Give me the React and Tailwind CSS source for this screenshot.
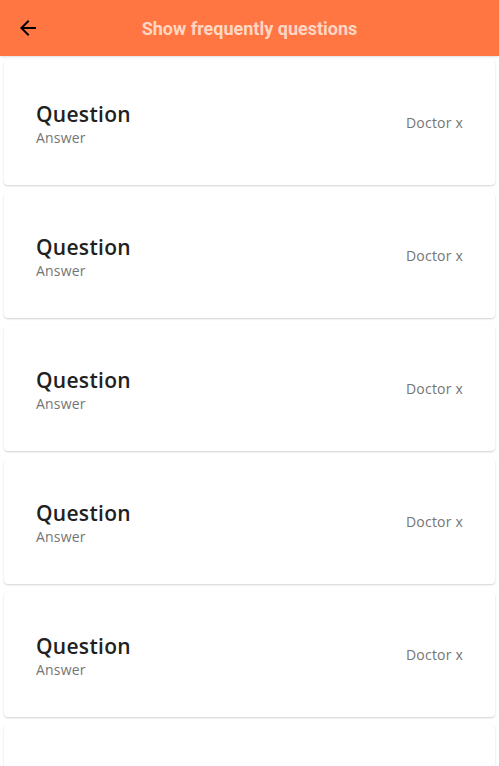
export default function App() {
  const items = [1, 2, 3, 4, 5]
  return (
    <div className="h-[766px] overflow-hidden bg-white">
      <div className="h-14 bg-[#ff7643] flex items-center px-4 shadow-sm">
        <svg width="24" height="24" viewBox="0 0 24 24" fill="#000">
          <path d="M20 11H7.83l5.59-5.59L12 4l-8 8 8 8 1.41-1.41L7.83 13H20v-2z" />
        </svg>
        <div className="flex-1 text-center pr-6 text-[18px] font-bold text-[#ffd6c4]" style={{ fontFamily: "Roboto, sans-serif" }}>
          Show frequently questions
        </div>
      </div>
      <div className="p-1" style={{ fontFamily: "'Open Sans', sans-serif" }}>
        {items.map((i) => (
          <div
            key={i}
            className="mb-2 h-[125px] rounded bg-white shadow-[0_1px_2px_rgba(0,0,0,0.18)] flex items-center justify-between px-8"
          >
            <div className="flex flex-col pt-1">
              <span className="text-[21px] font-semibold tracking-[0.3px] text-[#212121] leading-[26px]">Question</span>
              <span className="text-[14px] tracking-[0.2px] text-[#757575] leading-[22px]">Answer</span>
            </div>
            <span className="text-[14px] tracking-[0.2px] text-[#757575]">Doctor x</span>
          </div>
        ))}
        {/* partially visible next card */}
        <div className="h-[125px] rounded bg-white shadow-[0_1px_2px_rgba(0,0,0,0.18)]" />
      </div>
    </div>
  )
}
